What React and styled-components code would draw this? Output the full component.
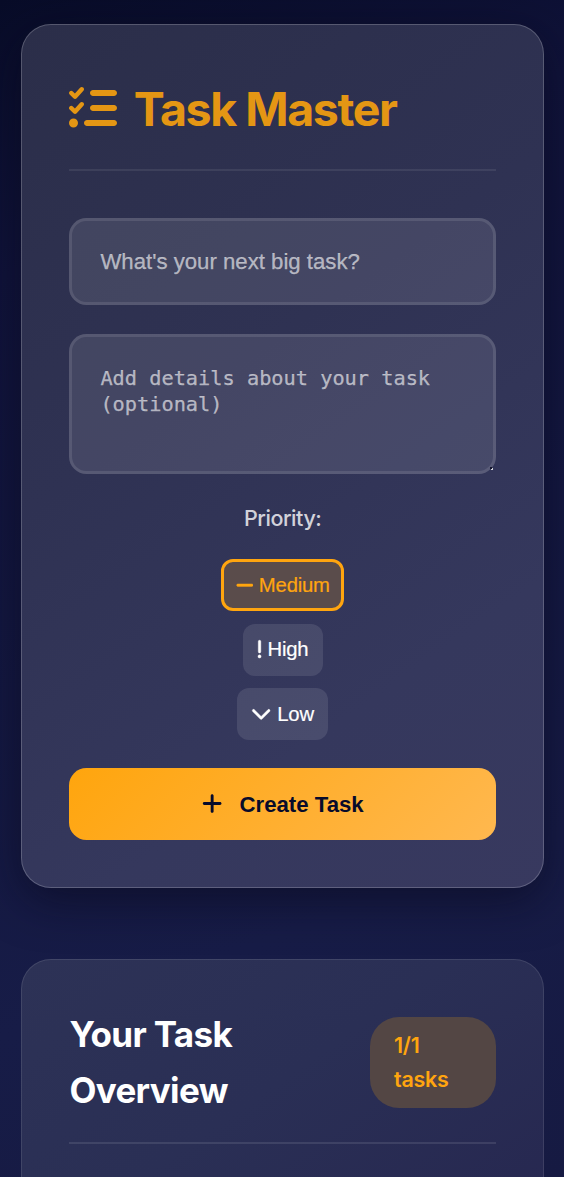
import React from "react";
import styled, { createGlobalStyle, css } from "styled-components";
import {
  FaListCheck,
  FaMinus,
  FaExclamation,
  FaChevronDown,
  FaPlus,
} from "react-icons/fa6";

const GlobalStyle = createGlobalStyle`
  * { box-sizing: border-box; }
  body {
    margin: 0;
    height: 1177px;
    overflow: hidden;
    font-family: Inter, sans-serif;
    line-height: 1.6;
    color: #fff;
    background: linear-gradient(160deg, #080c28 0%, #10133a 20%, #171c47 75%, #161a42 100%);
  }
`;

const Page = styled.main`
  display: flex;
  flex-direction: column;
  gap: 71px;
  height: 1177px;
  overflow: hidden;
  padding: 23.5px 20px 0 21.4px;
`;

const Card = styled.section`
  flex: none;
  padding: 47px;
  border: 1px solid rgba(255, 255, 255, 0.2);
  border-radius: 30px;
`;

const ComposerCard = styled(Card)`
  height: 864.5px;
  background: linear-gradient(145deg, #2b2e49 0%, #2f3253 40%, #35385d 75%, #38395f 100%)
    border-box;
  box-shadow: 0 12px 46px rgba(8, 8, 28, 0.6);
`;

const OverviewCard = styled(Card)`
  height: 500px;
  border-color: rgba(255, 255, 255, 0.1);
  background: linear-gradient(145deg, #2d3256 0%, #2a2f55 35%, #262750 75%) border-box;
`;

const Header = styled.header`
  display: flex;
  align-items: center;
  height: 99px;
  padding-bottom: 22px;
  border-bottom: 2px solid rgba(255, 255, 255, 0.08);
  color: #e49614;
`;

const Title = styled.h1`
  display: flex;
  align-items: center;
  gap: 16.3px;
  margin: 0;
  font-size: 46.5px;
  font-weight: 700;
  line-height: 74px;
  letter-spacing: -1.4px;
  white-space: nowrap;

  svg {
    width: 48px;
    height: 48px;
    margin-top: -2px;
  }
`;

const Form = styled.form`
  display: flex;
  flex-direction: column;
  padding-top: 47px;
`;

const field = css`
  display: block;
  width: 100%;
  margin: 0 0 29px;
  border: 3px solid rgba(255, 255, 255, 0.1);
  border-radius: 17.5px;
  outline: none;
  background: rgba(255, 255, 255, 0.1);
  color: #fff;

  &::placeholder {
    color: rgba(255, 255, 255, 0.6);
    -webkit-text-stroke: 0.25px rgba(255, 255, 255, 0.5);
  }
`;

const TaskInput = styled.input`
  ${field}
  height: 87px;
  padding: 1px 28px 0;
  font: 22.2px "Liberation Sans", Arial, sans-serif;
`;

const DetailsInput = styled.textarea`
  ${field}
  height: 140px;
  padding: 28px;
  overflow: hidden;
  resize: vertical;
  font: 20.3px / 26px "DejaVu Sans Mono", monospace;

  &::-webkit-resizer {
    background:
      linear-gradient(#14162c, #14162c) 12px 11px / 2px 2px no-repeat,
      linear-gradient(#d5d6de, #d5d6de) 13px 12px / 2px 2px no-repeat;
  }
`;

const PriorityGroup = styled.div`
  display: flex;
  flex-direction: column;
  align-items: center;
  gap: 12.3px;
`;

const PriorityLabel = styled.span`
  height: 44.5px;
  font-size: 21.5px;
  font-weight: 500;
  line-height: 31px;
  letter-spacing: -0.45px;
  color: rgba(255, 255, 255, 0.8);
`;

const PriorityButton = styled.button`
  display: flex;
  align-items: center;
  justify-content: center;
  gap: 5.5px;
  width: ${(p) => p.$width}px;
  height: 52px;
  padding: 0.5px 0 0;
  border: ${(p) => (p.$active ? "3px solid #ffa50f" : "0")};
  border-radius: 12px;
  background: ${(p) => (p.$active ? "#5a4c4b" : "rgba(255, 255, 255, 0.1)")};
  color: ${(p) => (p.$active ? "#ffa50f" : "#fff")};
  font: 20.3px "Liberation Sans", Arial, sans-serif;
  letter-spacing: -0.2px;
  -webkit-text-stroke: 0.2px currentColor;

  svg {
    flex: none;
    width: ${(p) => p.$iconWidth}px;
    height: 20.3px;
    margin-top: -1px;
    stroke: currentColor;
    stroke-width: 10px;
  }
`;

const SubmitButton = styled.button`
  display: flex;
  align-items: center;
  justify-content: center;
  gap: 17.5px;
  height: 72px;
  margin-top: 28px;
  padding: 2px 0 0;
  border: 0;
  border-radius: 17.5px;
  background: linear-gradient(135deg, #ffa50d, #ffb84f);
  color: #070b2b;
  font: 700 22.2px "Liberation Sans", Arial, sans-serif;

  svg {
    width: 20.3px;
    height: 23px;
    margin-top: -3px;
  }
`;

const OverviewHeader = styled.header`
  display: flex;
  align-items: center;
  justify-content: space-between;
  height: 137px;
  padding-bottom: 24px;
  border-bottom: 2px solid rgba(255, 255, 255, 0.1);
`;

const OverviewTitle = styled.h2`
  width: 210px;
  margin: -2px 0 0;
  font-size: 35px;
  font-weight: 700;
  line-height: 56px;
  letter-spacing: -0.65px;
`;

const CountBadge = styled.span`
  width: 126px;
  height: 91px;
  padding: 11px 24px;
  border-radius: 29px;
  background: #534644;
  color: #ffa50f;
  font-size: 21.5px;
  font-weight: 600;
  line-height: 34.4px;
  letter-spacing: -0.3px;
`;

const priorities = [
  { name: "Medium", Icon: FaMinus, width: 122.5, iconWidth: 17.8, active: true },
  { name: "High", Icon: FaExclamation, width: 80, iconWidth: 5.1 },
  { name: "Low", Icon: FaChevronDown, width: 90.5, iconWidth: 20.3 },
];

export default function App() {
  return (
    <>
      <GlobalStyle />
      <Page>
        <ComposerCard>
          <Header>
            <Title>
              <FaListCheck />
              Task Master
            </Title>
          </Header>
          <Form onSubmit={(e) => e.preventDefault()}>
            <TaskInput placeholder="What's your next big task?" />
            <DetailsInput placeholder="Add details about your task (optional)" />
            <PriorityGroup>
              <PriorityLabel>Priority:</PriorityLabel>
              {priorities.map(({ name, Icon, width, iconWidth, active }) => (
                <PriorityButton
                  key={name}
                  type="button"
                  $active={active}
                  $width={width}
                  $iconWidth={iconWidth}
                >
                  <Icon />
                  {name}
                </PriorityButton>
              ))}
            </PriorityGroup>
            <SubmitButton>
              <FaPlus />
              Create Task
            </SubmitButton>
          </Form>
        </ComposerCard>
        <OverviewCard>
          <OverviewHeader>
            <OverviewTitle>Your Task Overview</OverviewTitle>
            <CountBadge>
              1/1
              <br />
              tasks
            </CountBadge>
          </OverviewHeader>
        </OverviewCard>
      </Page>
    </>
  );
}
